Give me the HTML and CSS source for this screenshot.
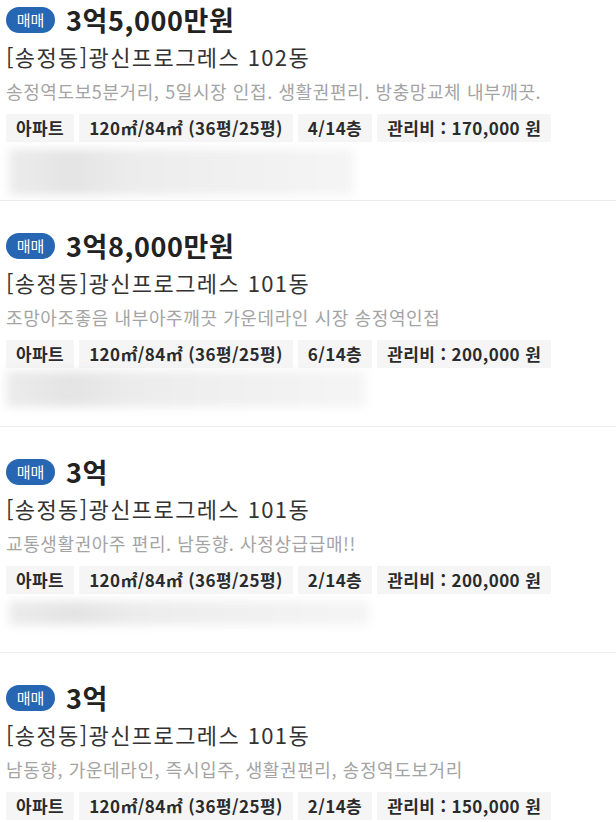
FILE: index.html
```html
<!DOCTYPE html>
<html lang="ko">
<head>
<meta charset="utf-8">
<link rel="stylesheet" href="styles.css">
</head>
<body>
<ul class="list">
  <li class="item first">
    <div class="head"><span class="badge">매매</span><span class="price">3억5,000만원</span></div>
    <div class="title">[송정동]광신프로그레스 102동</div>
    <div class="desc">송정역도보5분거리, 5일시장 인접. 생활권편리. 방충망교체 내부깨끗.</div>
    <div class="tags"><span class="tag">아파트</span><span class="tag">120㎡/84㎡ (36평/25평)</span><span class="tag">4/14층</span><span class="tag">관리비 : 170,000 원</span></div>
    <div class="blur b1"></div>
  </li>
  <li class="item">
    <div class="head"><span class="badge">매매</span><span class="price">3억8,000만원</span></div>
    <div class="title">[송정동]광신프로그레스 101동</div>
    <div class="desc">조망아조좋음 내부아주깨끗 가운데라인 시장 송정역인접</div>
    <div class="tags"><span class="tag">아파트</span><span class="tag">120㎡/84㎡ (36평/25평)</span><span class="tag">6/14층</span><span class="tag">관리비 : 200,000 원</span></div>
    <div class="blur b2"></div>
  </li>
  <li class="item">
    <div class="head"><span class="badge">매매</span><span class="price">3억</span></div>
    <div class="title">[송정동]광신프로그레스 101동</div>
    <div class="desc">교통생활권아주 편리. 남동향. 사정상급급매!!</div>
    <div class="tags"><span class="tag">아파트</span><span class="tag">120㎡/84㎡ (36평/25평)</span><span class="tag">2/14층</span><span class="tag">관리비 : 200,000 원</span></div>
    <div class="blur b3"></div>
  </li>
  <li class="item">
    <div class="head"><span class="badge">매매</span><span class="price">3억</span></div>
    <div class="title">[송정동]광신프로그레스 101동</div>
    <div class="desc">남동향, 가운데라인, 즉시입주, 생활권편리, 송정역도보거리</div>
    <div class="tags"><span class="tag">아파트</span><span class="tag">120㎡/84㎡ (36평/25평)</span><span class="tag">2/14층</span><span class="tag">관리비 : 150,000 원</span></div>
  </li>
</ul>
</body>
</html>
```

FILE: styles.css
```css
html, body {
  margin: 0;
  padding: 0;
  background: #fff;
  overflow: hidden;
}
body {
  font-family: "Noto Sans CJK KR", "Noto Sans", sans-serif;
  color: #333;
}
.list {
  list-style: none;
  margin: 0;
  padding: 0;
}
.item {
  box-sizing: content-box;
  height: 193px;
  padding: 32px 0 0 6px;
  border-bottom: 1px solid #ececec;
  overflow: hidden;
}
.item.first {
  height: 193px;
  padding-top: 7px;
}
.head {
  display: flex;
  align-items: center;
  height: 26px;
}
.badge {
  display: inline-flex;
  align-items: center;
  justify-content: center;
  width: 49px;
  height: 26px;
  border-radius: 13px;
  background: #2766b2;
  color: #fff;
  font-size: 15px;
  line-height: 26px;
}
.price {
  margin-left: 11px;
  font-size: 27px;
  font-weight: 700;
  color: #222;
  line-height: 26px;
  letter-spacing: 0.6px;
}
.title {
  margin-top: 8px;
  font-size: 22px;
  line-height: 31px;
  color: #333;
  letter-spacing: 1.4px;
  white-space: nowrap;
}
.desc {
  margin-top: 6px;
  font-size: 18px;
  line-height: 27px;
  color: #a4a4a4;
  letter-spacing: 0.6px;
  white-space: nowrap;
}
.tags {
  display: flex;
  gap: 5px;
  margin-top: 9px;
}
.tag {
  height: 28px;
  line-height: 28px;
  padding: 0 10px;
  background: #f5f5f5;
  color: #2b2b2b;
  font-size: 17px;
  font-weight: 700;
  letter-spacing: 0.4px;
  white-space: nowrap;
}
.blur {
  margin-top: 7px;
  background: linear-gradient(90deg, #ececec 0%, #e4e4e4 18%, #ececec 35%, #f1f1f1 70%, #f5f5f5 100%);
  filter: blur(5px);
}
.b1 { width: 345px; height: 46px; margin-left: 3px; }
.b2 { width: 360px; height: 36px; margin-top: 3px; }
.b3 { width: 360px; height: 24px; margin-left: 3px; }
```
